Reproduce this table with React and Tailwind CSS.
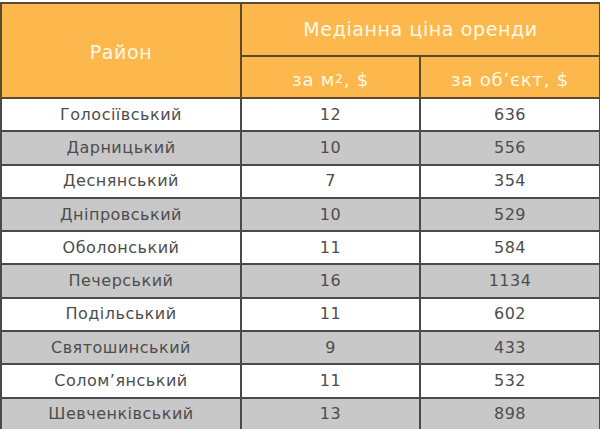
import React from "react";

const rows = [
  { name: "Голосіївський", sqm: 12, total: 636 },
  { name: "Дарницький", sqm: 10, total: 556 },
  { name: "Деснянський", sqm: 7, total: 354 },
  { name: "Дніпровський", sqm: 10, total: 529 },
  { name: "Оболонський", sqm: 11, total: 584 },
  { name: "Печерський", sqm: 16, total: 1134 },
  { name: "Подільський", sqm: 11, total: 602 },
  { name: "Святошинський", sqm: 9, total: 433 },
  { name: "Солом’янський", sqm: 11, total: 532 },
  { name: "Шевченківський", sqm: 13, total: 898 },
];

const App = () => {
  return (
    <div
      className="w-[600px] h-[429px] overflow-hidden bg-white pt-[2px]"
      style={{ fontFamily: '"DejaVu Sans", "Open Sans", sans-serif' }}
    >
      <table className="w-[599px] border-collapse table-fixed text-center">
        <colgroup>
          <col className="w-[240px]" />
          <col className="w-[179px]" />
          <col className="w-[180px]" />
        </colgroup>
        <thead>
          <tr className="bg-[#fdb84d] text-[#fff8e6] h-[53px]">
            <th
              rowSpan={2}
              className="border-2 border-[#5a4a30] font-normal text-[19px] tracking-[0.6px] pt-[4px]"
            >
              Район
            </th>
            <th
              colSpan={2}
              className="border-2 border-[#5a4a30] font-normal text-[19px] tracking-[0.6px]"
            >
              Медіанна ціна оренди
            </th>
          </tr>
          <tr className="bg-[#fdb84d] text-[#fff8e6] h-[42px]">
            <th className="border-2 border-[#5a4a30] font-normal text-[18px] tracking-[0.8px] pt-[4px]">
              за м<sup className="text-[12px] relative -top-[3px]">2</sup>, $
            </th>
            <th className="border-2 border-[#5a4a30] font-normal text-[18px] tracking-[0.8px] pt-[4px]">
              за об’єкт, $
            </th>
          </tr>
        </thead>
        <tbody className="text-[#4d4d4d] text-[16px] tracking-[0.5px]">
          {rows.map((r, i) => (
            <tr
              key={r.name}
              className={`h-[33.3px] ${i % 2 === 1 ? "bg-[#c8c8c8]" : "bg-white"}`}
            >
              <td className="border-2 border-[#4a4a4a] p-0">{r.name}</td>
              <td className="border-2 border-[#4a4a4a] p-0">{r.sqm}</td>
              <td className="border-2 border-[#4a4a4a] p-0">{r.total}</td>
            </tr>
          ))}
        </tbody>
      </table>
    </div>
  );
};

export default App;
